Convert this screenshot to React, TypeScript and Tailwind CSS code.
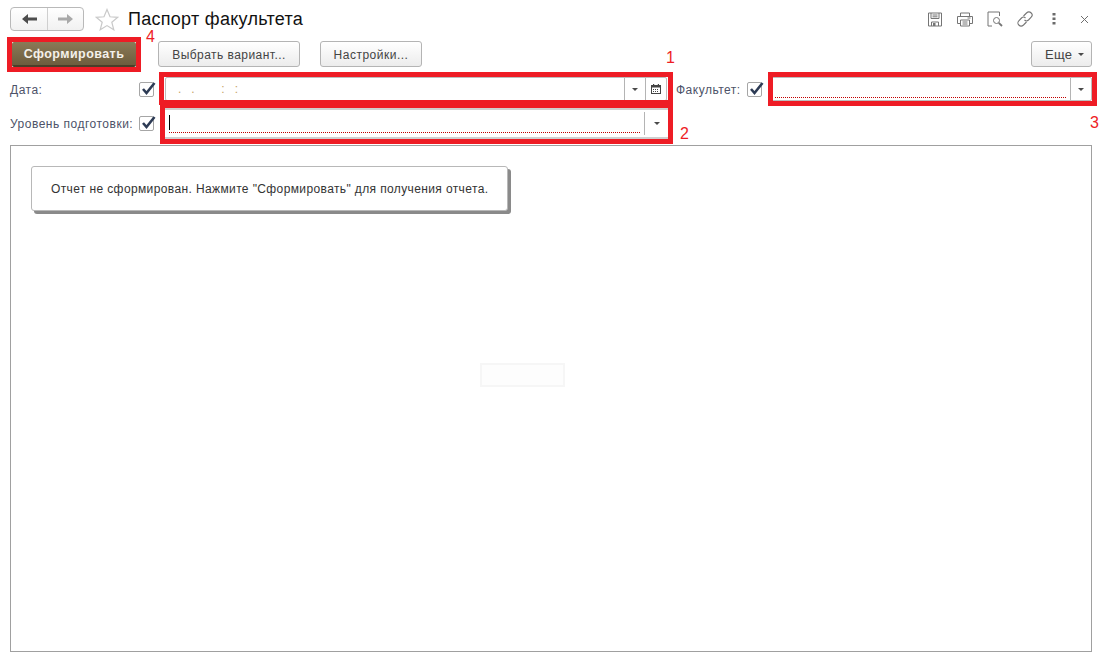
import React from "react";

const font = { fontFamily: '"Liberation Sans", Arial, sans-serif' };

function Check() {
  return (
    <span className="relative block w-[15px] h-[15px] border border-[#a6a6a6] rounded-[2px] bg-white shrink-0">
      <svg width="17" height="15" viewBox="0 0 17 15" className="absolute left-[0px] top-[-2px]">
        <path d="M3 8 L6.5 12 L14.5 2" fill="none" stroke="#2d3b55" strokeWidth="2.6" />
      </svg>
    </span>
  );
}

function Caret({ color = "#4a4a4a" }: { color?: string }) {
  return (
    <svg width="6" height="3" viewBox="0 0 6 3"><path d="M0 0 H6 L3 3 Z" fill={color} /></svg>
  );
}

function GrayBtn({ children, className }: { children: React.ReactNode; className: string }) {
  return (
    <div className={"flex items-center h-[26px] pt-[1px] border border-[#b4b4b4] rounded-[3px] bg-gradient-to-b from-white to-[#ececec] text-[#444] " + className}>
      {children}
    </div>
  );
}

export default function App() {
  return (
    <div className="relative w-[1103px] h-[660px] bg-white overflow-hidden" style={font}>
      {/* header */}
      <div className="flex items-center h-[41px] pl-[10px] pr-[12px] pb-[3px]">
        <div className="flex w-[74px] h-[24px] border border-[#b9b9b9] rounded-[4px] bg-gradient-to-b from-white to-[#f1f1f1]">
          <div className="flex items-center justify-center w-[37px] border-r border-[#cfcfcf]">
            <svg width="15" height="12" viewBox="0 0 15 12"><path d="M0 6 L6 1 V4.5 H15 V7.5 H6 V11 Z" fill="#4c4c4c" /></svg>
          </div>
          <div className="flex items-center justify-center flex-1">
            <svg width="15" height="12" viewBox="0 0 15 12"><path d="M15 6 L9 1 V4.5 H0 V7.5 H9 V11 Z" fill="#a9a9a9" /></svg>
          </div>
        </div>
        <svg width="24" height="23" viewBox="0 0 24 23" className="ml-[11px]">
          <path d="M12 1.5 L15 8.8 L22.8 9.3 L16.8 14.2 L18.8 21.8 L12 17.6 L5.2 21.8 L7.2 14.2 L1.2 9.3 L9 8.8 Z" fill="#fff" stroke="#c9c9c9" strokeWidth="1.2" />
        </svg>
        <div className="ml-[9px] text-[18px] leading-[20px] tracking-[0.28px] text-[#111]">Паспорт факультета</div>
        <div className="ml-auto flex items-center text-[#777]">
          <svg width="16" height="15" viewBox="0 0 16 15" fill="none" stroke="#757575" strokeWidth="1">
            <path d="M1.5 1 H14.5 V14 H1.5 Z" />
            <path d="M4 1 V6.5 H12 V1 M5.5 3 H10.5 M5.5 4.8 H10.5" />
            <path d="M4.5 14 V10 H11.5 V14" />
            <rect x="6" y="11" width="2.5" height="3" fill="#757575" stroke="none" />
          </svg>
          <svg width="18" height="15" viewBox="0 0 18 15" fill="none" stroke="#757575" strokeWidth="1" className="ml-[13px]">
            <path d="M4.5 4 V1 H13.5 V4" />
            <path d="M4 11.5 H1.5 V4.5 H16.5 V11.5 H14" />
            <path d="M4.5 8 H13.5 V14 H4.5 Z M6.5 10 H11.5 M6.5 12 H11.5 M11.5 6 H14.5" />
          </svg>
          <svg width="16" height="16" viewBox="0 0 16 16" fill="none" stroke="#757575" strokeWidth="1" className="ml-[13px]">
            <path d="M12.5 1 H1 V15 H5 M12.5 1 V5" />
            <circle cx="9.5" cy="9.5" r="3" />
            <path d="M11.8 11.8 L15 15" strokeWidth="1.8" />
          </svg>
          <svg width="16" height="16" viewBox="0 0 16 16" fill="none" stroke="#757575" strokeWidth="1.1" className="ml-[14px]">
            <path d="M6.5 5 L9.5 2 C11 .6 13 .8 14.2 2 C15.4 3.2 15.4 5 14.2 6.2 L11.5 9 C10.2 10.2 8.5 10 7.5 9" />
            <path d="M9.5 11 L6.5 14 C5 15.4 3 15.2 1.8 14 C.6 12.8 .6 11 1.8 9.8 L4.5 7 C5.8 5.8 7.5 6 8.5 7" />
          </svg>
          <svg width="4" height="12" viewBox="0 0 4 12" className="ml-[19px]" fill="#6b6b6b">
            <rect x="0.5" y="0" width="3" height="2.5" /><rect x="0.5" y="4.5" width="3" height="2.5" /><rect x="0.5" y="9" width="3" height="2.5" />
          </svg>
          <svg width="9" height="9" viewBox="0 0 9 9" className="ml-[24px] mr-[2px]" stroke="#6e6e6e" strokeWidth="1" fill="none">
            <path d="M1 1 L8 8 M8 1 L1 8" />
          </svg>
        </div>
      </div>

      {/* command bar */}
      <div className="flex items-center h-[26px] pl-[12px] pr-[11px]">
        <div className="flex items-center justify-center self-end w-[124px] h-[25px] pt-[1px] rounded-[2px] border-b-2 border-[#4a3f29] bg-gradient-to-b from-[#8b7a57] to-[#6d5d3e] text-[#f4f1ea] text-[12.5px] font-bold tracking-[0.45px]">
          Сформировать
        </div>
        <GrayBtn className="justify-center w-[142px] ml-[22px] text-[12px] tracking-[0.45px]">Выбрать вариант...</GrayBtn>
        <GrayBtn className="justify-center w-[102px] ml-[20px] text-[12px] tracking-[0.5px]">Настройки...</GrayBtn>
        <GrayBtn className="w-[61px] ml-auto pl-[13px] gap-[6px] text-[13px] tracking-[0.3px]">Еще <Caret /></GrayBtn>
      </div>

      {/* filter row 1 */}
      <div className="flex items-center h-[24px] mt-[10px] pl-[10px] pr-[11px] text-[12px] text-[#4d5268] tracking-[0.5px]">
        <div className="w-[129px] pt-[1px]">Дата:</div>
        <Check />
        <div className="flex items-center w-[502px] h-[24px] ml-[11px] border border-[#bdbdbd] rounded-[2px] bg-white">
          <div className="flex-1 pl-[12px] text-[#c8a467] leading-[20px] tracking-[0] whitespace-pre">.   .        :   :</div>
          <div className="flex items-center justify-center w-[21px] h-full border-l border-[#b4b4b4]"><Caret /></div>
          <div className="flex items-center justify-center w-[21px] h-full border-l border-[#b4b4b4]">
            <svg width="10" height="10" viewBox="0 0 10 10">
              <rect x="0.5" y="1.5" width="9" height="8" fill="none" stroke="#444" />
              <rect x="0.5" y="1" width="9" height="2.5" fill="#444" />
              <rect x="2" y="0" width="1.2" height="2" fill="#444" /><rect x="6.8" y="0" width="1.2" height="2" fill="#444" />
              <path d="M2 5.5 H8 M2 7.5 H8" stroke="#444" strokeDasharray="1 1" />
            </svg>
          </div>
        </div>
        <div className="ml-[9px] w-[71px] pt-[1px]">Факультет:</div>
        <Check />
        <div className="flex items-center flex-1 h-[24px] ml-[9px] border border-[#bdbdbd] rounded-[2px] bg-white">
          <div className="flex-1 h-full relative"><div className="absolute left-[3px] right-[4px] bottom-[2px] border-b border-dotted border-[#c00000]" /></div>
          <div className="flex items-center justify-center w-[21px] h-full border-l border-[#b4b4b4]"><Caret /></div>
        </div>
      </div>

      {/* filter row 2 */}
      <div className="flex items-center h-[31px] mt-[7px] pl-[10px] pr-[11px] text-[12px] text-[#4d5268] tracking-[0.5px]">
        <div className="w-[129px]">Уровень подготовки:</div>
        <Check />
        <div className="flex items-center w-[503px] h-[31px] ml-[11px] border-y-2 border-[#cfcfcf] bg-white">
          <div className="flex-1 h-full relative">
            <div className="absolute left-[4px] top-[5px] w-px h-[15px] bg-black" />
            <div className="absolute left-[4px] right-[4px] bottom-[4px] border-b border-dotted border-[#c00000]" />
          </div>
          <div className="flex items-center justify-center w-[24px] h-[23px] border-l border-[#b4b4b4]"><Caret /></div>
        </div>
      </div>

      {/* report panel */}
      <div className="relative mt-[6px] ml-[10px] w-[1082px] h-[507px] border border-[#a0a0a0] bg-white pt-[20px] pl-[20px]">
        <div className="flex items-center w-[477px] h-[45px] pl-[19px] bg-white border border-[#b8b8b8] rounded-[3px] shadow-[3px_3px_0_#8a8a8a] text-[12px] tracking-[0.38px] text-[#333]">
          Отчет не сформирован. Нажмите "Сформировать" для получения отчета.
        </div>
        <div className="absolute left-[469px] top-[217px] w-[85px] h-[24px] border-2 border-[#f6f6f6] bg-[#fdfdfd]" />
      </div>

      {/* annotation overlays */}
      <div className="absolute left-[7px] top-[37px] w-[134px] h-[35px] border-[5px] border-[#ee1c25]" />
      <div className="absolute left-[159px] top-[72px] w-[514px] h-[33px] border-[5px] border-[#ee1c25]" />
      <div className="absolute left-[160px] top-[103px] w-[513px] h-[41px] border-[5px] border-[#ee1c25]" />
      <div className="absolute left-[768px] top-[72px] w-[329px] h-[34px] border-[5px] border-[#ee1c25]" />
      <div className="absolute left-[146px] top-[30px] text-[16px] leading-[13px] text-[#ee1c25]">4</div>
      <div className="absolute left-[666px] top-[49px] text-[16px] leading-[18px] text-[#ee1c25]">1</div>
      <div className="absolute left-[680px] top-[125px] text-[16px] leading-[18px] text-[#ee1c25]">2</div>
      <div className="absolute left-[1090px] top-[114px] text-[16px] leading-[18px] text-[#ee1c25]">3</div>
    </div>
  );
}
